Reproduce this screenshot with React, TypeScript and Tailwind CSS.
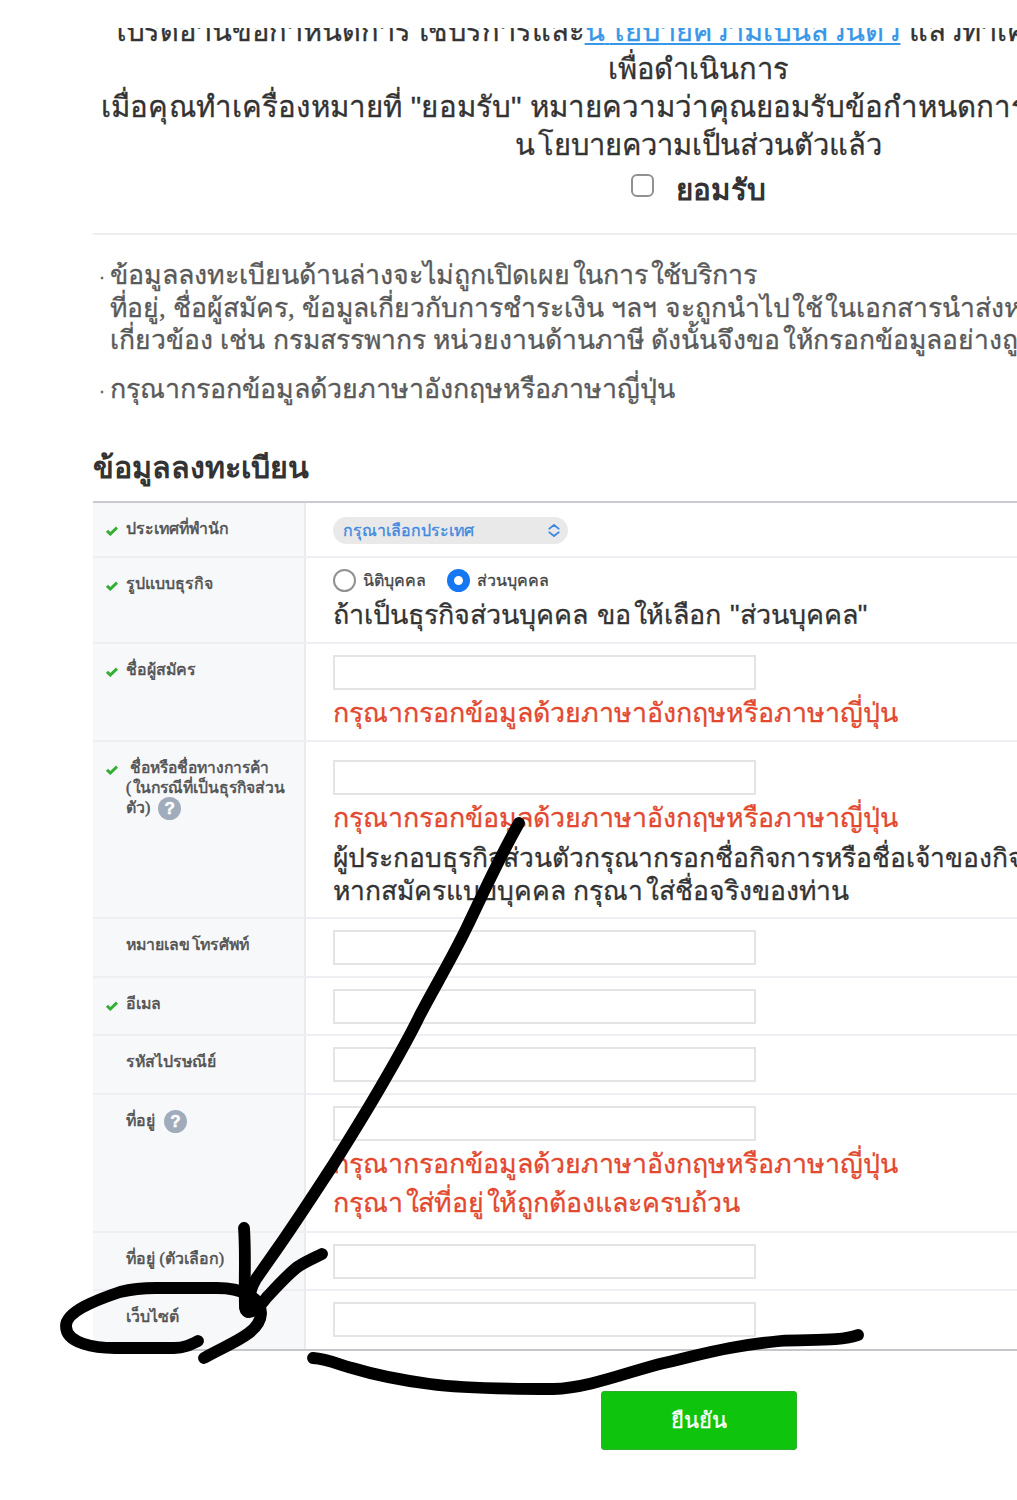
import type { ReactNode } from 'react';

const HINT = 'กรุณากรอกข้อมูลด้วยภาษาอังกฤษหรือภาษาญี่ปุ่น';

/* Sets the tall leading vowels slightly apart and Latin commas and brackets in serif. */
function Thai({ children }: { children: string }) {
  return (
    <>
      {children.split(/([ใโ]|[(),])/).map((part, i) => {
        if (part === 'ใ' || part === 'โ')
          return (
            <span key={i} className="-mr-[0.02em] ml-[0.1em]">
              {part}
            </span>
          );
        if (/^[(),]$/.test(part))
          return (
            <span key={i} className="font-['Liberation_Serif',serif]">
              {part}
            </span>
          );
        return part;
      })}
    </>
  );
}

function Check() {
  return (
    <svg viewBox="0 0 12 10" className="h-[10px] w-[12px]" fill="none">
      <path d="M1 4.8 4.3 8 11 1.6" stroke="#35ae35" strokeWidth="3" />
    </svg>
  );
}

function Help() {
  return (
    <span className="inline-flex size-[23px] shrink-0 items-center justify-center rounded-full bg-[#a0abbb] font-['Liberation_Sans'] text-[17px] font-bold leading-none text-white">
      ?
    </span>
  );
}

function Row({
  height,
  required,
  label,
  children,
}: {
  height: string;
  required?: boolean;
  label: ReactNode;
  children: ReactNode;
}) {
  return (
    <div className={`flex border-b-2 border-[#eeeff2] last:border-[#c4c6ca] ${height}`}>
      <div className="flex w-[213px] shrink-0 border-r-2 border-[#eaebee] bg-[#f7f8fa] pt-[16px] text-[15.9px] leading-[20px] text-[#505050] [-webkit-text-stroke:0.5px]">
        <div className="w-[33px] shrink-0 pl-[13px] pt-[7px]">{required && <Check />}</div>
        <div className="whitespace-nowrap">{label}</div>
      </div>
      <div className="min-w-0 flex-1 pl-[27px]">{children}</div>
    </div>
  );
}

function Field({ top = 'mt-[11px]' }: { top?: string }) {
  return <input type="text" className={`mb-[4px] block h-[35px] w-[423px] border-2 border-[#e3e4e6] bg-white ${top}`} />;
}

function Hint({ children }: { children: string }) {
  return (
    <p className="h-[39px] whitespace-nowrap text-[26.8px] leading-[39px] text-[#e2492f]">
      <Thai>{children}</Thai>
    </p>
  );
}

function Scribble() {
  return (
    <svg
      viewBox="0 0 1017 1500"
      className="pointer-events-none absolute left-0 top-0 h-[1500px] w-[1017px]"
      fill="none"
      stroke="#000"
      strokeWidth="11.8"
      strokeLinecap="round"
      strokeLinejoin="round"
    >
      <path d="M519 823C499 858 482 896 467 927C450 962 434 988 420 1015C408 1040 394 1064 380 1088C366 1112 350 1138 333 1165C314 1194 296 1222 277 1249L256 1279C250 1289 248 1302 248 1312" />
      <path d="M244 1228C246 1256 244 1284 245 1308C246 1314 252 1312 256 1309C262 1305 264 1300 268 1296C280 1283 290 1272 299 1266C307 1261 314 1258 322 1254" />
      <path d="M198 1341C190 1345 184 1348 174 1348H115C96 1348 66 1344 66 1326C66 1312 96 1300 120 1292C132 1289 142 1288 156 1288H217C240 1288 262 1296 261 1314C260 1334 228 1344 204 1358" />
      <path d="M313 1358C328 1359 340 1365 352 1368C375 1375 400 1380 430 1384C460 1388 500 1389 553 1389C590 1388 630 1371 664 1363C690 1357 708 1352 730 1348C746 1345 760 1343 780 1341C805 1339 840 1342 858 1335" />
    </svg>
  );
}

export default function App() {
  return (
    <main className="relative h-[1500px] w-[1017px] overflow-hidden bg-white pl-[93px] pt-[28px] font-['Liberation_Sans',sans-serif] text-[#333] [-webkit-text-stroke:0.3px]">
      <div className="w-[1211px] whitespace-nowrap">
        <section className="h-[207px] border-b-2 border-[#eee] text-[29.1px] leading-[38px]">
          <div className="flex h-[22px] items-end overflow-hidden pl-[15px]">
            <p className="text-[29px]">
              <Thai>โปรดอ่านข้อกำหนดการใช้บริการและ</Thai>
              <a className="text-[#3797e8] underline decoration-2 underline-offset-[2px]">
                น{'\u200A\u200A'}โยบายความเป็นส่วนตัว
              </a>{' '}
              แล้วทำเครื่องหมาย
            </p>
          </div>
          <p className="text-center">เพื่อดำเนินการ</p>
          <p className="pl-[8px] text-[29.5px]">
            <span className="tracking-[0.15px]">เมื่อคุณทำเครื่องหมายที่ "ยอมรับ" </span>
            หมายความว่าคุณยอมรับข้อกำหนดการ<Thai>ใช้บริการ</Thai>
          </p>
          <p className="text-center">
            <Thai>นโยบายความเป็นส่วนตัวแล้ว</Thai>
          </p>
          <label className="mt-[7px] flex items-start justify-center text-[29.6px] font-bold [-webkit-text-stroke:0px]">
            <span className="mr-[22px] mt-[3px] size-[23px] rounded-[6px] border-2 border-[#919191]" />
            ยอมรับ
          </label>
        </section>

        <ul className="pt-[24px] text-[26.5px] leading-[32.5px] text-[#5a5a5a]">
          <li className="flex">
            <span className="w-[17px] shrink-0 pl-[6px] pt-[2px] text-[18px]">·</span>
            <div>
              <p className="text-[26.8px]">
                <Thai>ข้อมูลลงทะเบียนด้านล่างจะไม่ถูกเปิดเผยในการใช้บริการ</Thai>
              </p>
              <p>
                <Thai>ที่อยู่, ชื่อผู้สมัคร, ข้อมูลเกี่ยวกับการชำระเงิน ฯลฯ จะถูกนำไปใช้ในเอกสารนำส่งหน่วยงาน</Thai>
              </p>
              <p>
                <Thai>เกี่ยวข้อง เช่น กรมสรรพากร หน่วยงานด้านภาษี ดังนั้นจึงขอให้กรอกข้อมูลอย่างถูกต้อง</Thai>
              </p>
            </div>
          </li>
          <li className="mt-[16px] flex">
            <span className="w-[17px] shrink-0 pl-[6px] pt-[2px] text-[18px]">·</span>
            <p className="text-[26.8px]">{HINT}</p>
          </li>
        </ul>

        <h2 className="mt-[38px] h-[56px] text-[30.4px] font-bold leading-[44px] [-webkit-text-stroke:0px]">ข้อมูลลงทะเบียน</h2>

        <div className="border-t-2 border-[#c9cad2]">
          <Row height="h-[55px]" required label="ประเทศที่พำนัก">
            <div className="mt-[14px] flex h-[27px] w-[235px] items-center justify-between rounded-full bg-[#e9e9ea] pl-[10px] pr-[8px] text-[15.9px] text-[#3c87e0]">
              <span>กรุณาเลือกประเทศ</span>
              <svg viewBox="0 0 12 14" className="h-[13px] w-[12px]" fill="none" stroke="#3c87e0" strokeWidth="2" strokeLinecap="round" strokeLinejoin="round">
                <path d="M1 5 6 1l5 4M1 9l5 4 5-4" />
              </svg>
            </div>
          </Row>
          <Row height="h-[86px]" required label="รูปแบบธุรกิจ">
            <div className="flex h-[23px] items-center pt-[22px] text-[16px] font-medium text-[#444]">
              <span className="mr-[7px] size-[23px] rounded-full border-2 border-[#919191]" />
              นิติบุคคล
              <span className="ml-[21px] mr-[7px] size-[23px] rounded-full border-[7px] border-[#1677f2]" />
              ส่วนบุคคล
            </div>
            <p className="mt-[15px] text-[26.9px] leading-[38px] [word-spacing:1.5px]">
              <Thai>ถ้าเป็นธุรกิจส่วนบุคคล ขอให้เลือก "ส่วนบุคคล"</Thai>
            </p>
          </Row>
          <Row height="h-[98px]" required label="ชื่อผู้สมัคร">
            <Field />
            <Hint>{HINT}</Hint>
          </Row>
          <Row
            height="h-[177px]"
            required
            label={
              <>
                <p className="pl-[4px] text-[15.6px]">ชื่อหรือชื่อทางการค้า</p>
                <p className="text-[15.7px]">
                  <Thai>(ในกรณีที่เป็นธุรกิจส่วน</Thai>
                </p>
                <p className="flex h-[20px] items-center gap-[8px]">
                  <span>
                    <Thai>ตัว)</Thai>
                  </span>
                  <Help />
                </p>
              </>
            }
          >
            <Field top="mt-[18px]" />
            <Hint>{HINT}</Hint>
            <p className="mt-[4px] text-[26.4px] leading-[33px]">ผู้ประกอบธุรกิจส่วนตัวกรุณากรอกชื่อกิจการหรือชื่อเจ้าของกิจการ</p>
            <p className="text-[26.5px] leading-[33px]">
              <Thai>หากสมัครแบบบุคคล กรุณาใส่ชื่อจริงของท่าน</Thai>
            </p>
          </Row>
          <Row height="h-[59px]" label={<Thai>หมายเลขโทรศัพท์</Thai>}>
            <Field />
          </Row>
          <Row height="h-[58px]" required label="อีเมล">
            <Field />
          </Row>
          <Row height="h-[59px]" label="รหัสไปรษณีย์">
            <Field />
          </Row>
          <Row
            height="h-[138px]"
            label={
              <p className="flex h-[20px] items-center gap-[9px]">
                ที่อยู่ <Help />
              </p>
            }
          >
            <Field />
            <Hint>{HINT}</Hint>
            <Hint>กรุณาใส่ที่อยู่ให้ถูกต้องและครบถ้วน</Hint>
          </Row>
          <Row height="h-[58px]" label={<Thai>ที่อยู่ (ตัวเลือก)</Thai>}>
            <Field />
          </Row>
          <Row height="h-[60px]" label="เว็บไซต์">
            <Field />
          </Row>
        </div>

        <button className="mx-auto mt-[40px] block h-[59px] w-[196px] rounded-[3px] border border-[#2fae2f] bg-[#0fc40c] text-[22px] text-white">
          ยืนยัน
        </button>
      </div>
      <Scribble />
    </main>
  );
}
